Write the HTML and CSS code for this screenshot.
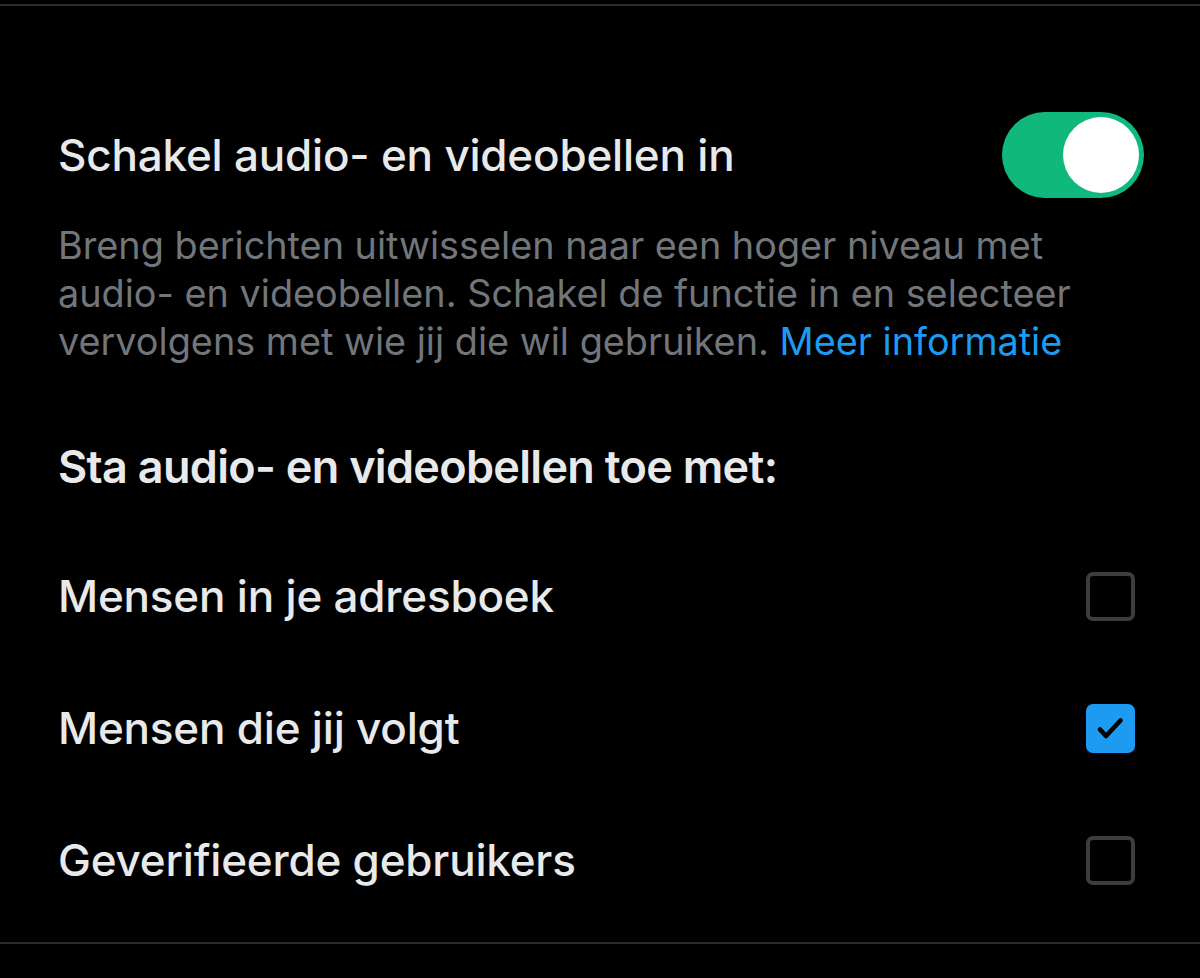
FILE: index.html
```html
<!DOCTYPE html>
<html lang="nl">
<head>
<meta charset="utf-8">
<link rel="stylesheet" href="styles.css">
</head>
<body>
<div class="page">
  <div class="rule rule-top"></div>
  <section class="settings">
    <div class="toggle-row">
      <span class="toggle-label">Schakel audio- en videobellen in</span>
      <span class="switch on"><span class="knob"></span></span>
    </div>
    <p class="desc">Breng berichten uitwisselen naar een hoger niveau met audio- en videobellen. Schakel de functie in en selecteer vervolgens met wie jij die wil gebruiken. <a class="link" href="#">Meer informatie</a></p>
    <h2 class="heading">Sta audio- en videobellen toe met:</h2>
    <ul class="options">
      <li class="option"><span class="option-label">Mensen in je adresboek</span><span class="check"></span></li>
      <li class="option"><span class="option-label">Mensen die jij volgt</span><span class="check checked"><svg viewBox="0 0 41 41" width="41" height="41"><path d="M10 21.5l6 6.5L30.5 12.5" fill="none" stroke="#000" stroke-width="4.6" stroke-linecap="round" stroke-linejoin="round"/></svg></span></li>
      <li class="option"><span class="option-label">Geverifieerde gebruikers</span><span class="check"></span></li>
    </ul>
  </section>
  <div class="rule rule-bottom"></div>
</div>
</body>
</html>
```

FILE: styles.css
```css
html, body {
  margin: 0;
  padding: 0;
  background: #000;
}
body {
  font-family: Inter, "Noto Sans", "Liberation Sans", sans-serif;
  color: #e7e9ea;
  width: 1200px;
  height: 978px;
  overflow: hidden;
}
.page {
  padding-top: 4px;
}
.rule {
  height: 2px;
  background: #2a2d30;
}
.settings {
  padding: 0 56px 0 58px;
}
.toggle-row {
  display: flex;
  align-items: center;
  justify-content: space-between;
  margin-top: 106px;
  height: 86px;
}
.toggle-label {
  font-size: 44px;
  font-weight: 500;
  letter-spacing: -0.2px;
}
.switch {
  width: 142px;
  height: 86px;
  border-radius: 43px;
  background: #10b97b;
  display: flex;
  align-items: center;
  justify-content: flex-end;
  padding: 0 5px;
  box-sizing: border-box;
}
.knob {
  width: 76px;
  height: 76px;
  border-radius: 50%;
  background: #fff;
}
.desc {
  margin: 23px 0 0;
  font-size: 37.8px;
  line-height: 48px;
  color: #71767b;
  font-weight: 400;
}
.link {
  color: #1d9bf0;
  text-decoration: none;
}
.heading {
  margin: 77px 0 0;
  font-size: 45px;
  line-height: 50px;
  font-weight: 600;
  letter-spacing: -0.7px;
}
.options {
  list-style: none;
  margin: 38px 0 0;
  padding: 0 9px 0 0;
}
.option {
  height: 132px;
  display: flex;
  align-items: center;
  justify-content: space-between;
}
.option-label {
  font-size: 44px;
  font-weight: 500;
  letter-spacing: -0.2px;
}
.check {
  width: 49px;
  height: 49px;
  box-sizing: border-box;
  border: 4px solid #3b3e41;
  border-radius: 7px;
  display: flex;
  align-items: center;
  justify-content: center;
}
.check svg {
  display: block;
  flex: none;
}
.check.checked {
  background: #1d9bf0;
  border-color: #1d9bf0;
}
.rule-bottom {
  margin-top: 16px;
}
```
